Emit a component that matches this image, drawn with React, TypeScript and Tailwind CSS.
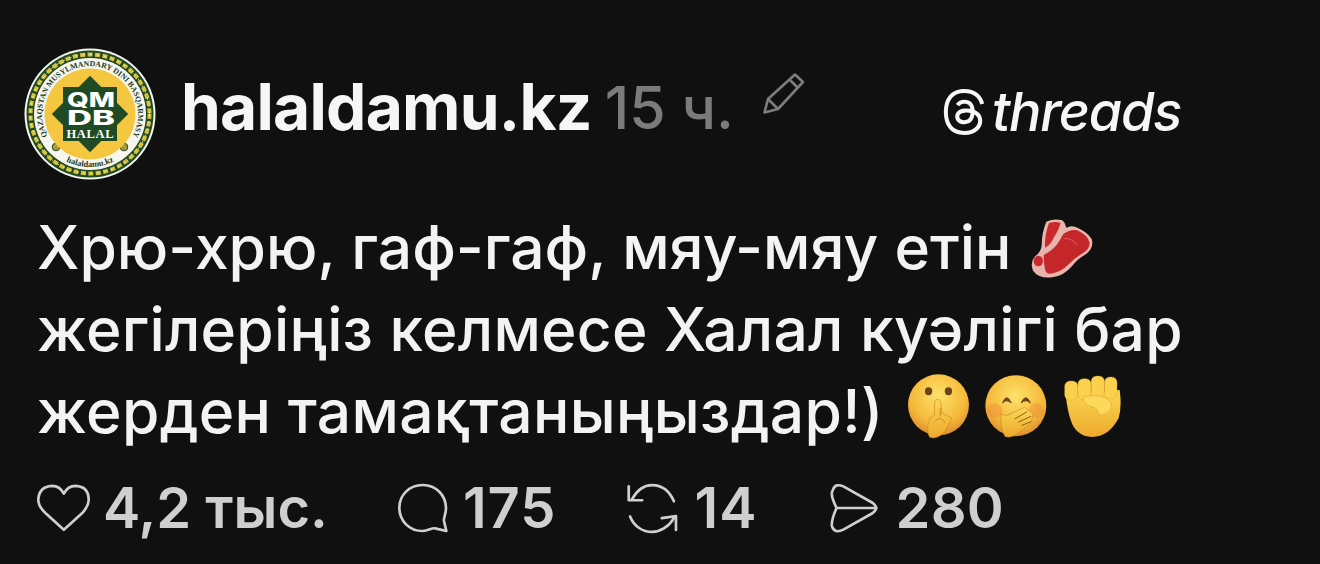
import { SiThreads } from "react-icons/si";

function Logo() {
  return (
    <svg width="132" height="132" viewBox="0 0 132 132" className="shrink-0">
      <defs>
        <path id="topArc" d="M 32 100 A 48 48 0 1 1 100 100" />
        <path id="bottomArc" d="M 28.5 103.5 A 53 53 0 0 0 103.5 103.5" />
      </defs>
      <circle cx="66" cy="66" r="65.5" fill="#f4f6ee" />
      <circle cx="66" cy="66" r="63.5" fill="#1f4a24" />
      <circle cx="66" cy="66" r="59.5" fill="none" stroke="#d8c23c" strokeWidth="4" strokeDasharray="5 2.5" />
      <circle cx="66" cy="66" r="59.5" fill="none" stroke="#f0e9b0" strokeWidth="1" strokeDasharray="2 5" />
      <circle cx="66" cy="66" r="56" fill="#f7f7f0" />
      <text fontFamily="Liberation Serif, serif" fontWeight="700" fontSize="7.8" fill="#1d3a20">
        <textPath href="#topArc" startOffset="50%" textAnchor="middle">QAZAQSTAN MUSYLMANDARY DINI BASQARMASY</textPath>
      </text>
      <text fontFamily="Liberation Serif, serif" fontWeight="700" fontSize="8.5" fill="#1d3a20">
        <textPath href="#bottomArc" startOffset="50%" textAnchor="middle">halaldamu.kz</textPath>
      </text>
      <circle cx="32" cy="99" r="3.8" fill="#a89b3c" stroke="#1f4a24" strokeWidth="1" />
      <circle cx="100" cy="99" r="3.8" fill="#a89b3c" stroke="#1f4a24" strokeWidth="1" />
      <circle cx="66" cy="66" r="45.5" fill="#f5c63f" />
      <rect x="39" y="39" width="54" height="54" fill="#1f4a24" />
      <rect x="39" y="39" width="54" height="54" fill="#1f4a24" transform="rotate(45 66 66)" />
      <g fontFamily="Inter, sans-serif" fontWeight="800" fill="#fff">
        <text x="43" y="59" fontSize="20.5" textLength="48" lengthAdjust="spacingAndGlyphs">QM</text>
        <text x="43" y="77" fontSize="20.5" textLength="48" lengthAdjust="spacingAndGlyphs">DB</text>
      </g>
      <text x="66" y="90" fontFamily="Liberation Serif, serif" fontWeight="700" fontSize="12.5" fill="#fff" textAnchor="middle" textLength="47">HALAL</text>
    </svg>
  );
}

function Meat() {
  return (
    <svg width="65" height="60" viewBox="60 0 195 180" className="shrink-0">
      <path d="M112 8 Q135 -2 160 4 Q170 12 172 26 Q185 18 200 24 Q235 38 248 60 Q256 85 232 105 Q205 120 190 140 Q165 170 130 175 Q90 180 72 155 Q62 130 78 112 Q95 100 98 80 Q98 40 112 8 Z" fill="#e8b4ac" />
      <path d="M120 12 Q140 6 155 12 Q150 30 135 55 Q125 78 108 86 Q106 50 120 12 Z" fill="#c9282c" />
      <path d="M163 45 Q185 30 205 34 Q238 50 242 72 Q242 90 222 102 Q195 118 180 135 Q155 160 125 164 Q110 165 108 150 Q104 130 104 108 Q130 95 145 75 Q155 60 163 45 Z" fill="#c4262a" />
      <path d="M165 58 Q190 58 205 78" fill="none" stroke="#e0605c" strokeWidth="3" />
      <ellipse cx="88" cy="126" rx="14" ry="16" fill="#c9282c" />
    </svg>
  );
}

function EmojiDefs() {
  return (
    <svg width="0" height="0" className="absolute">
      <defs>
        <radialGradient id="face" cx="50%" cy="35%" r="70%">
          <stop offset="0%" stopColor="#fde26a" />
          <stop offset="65%" stopColor="#f5b93a" />
          <stop offset="100%" stopColor="#d9822a" />
        </radialGradient>
        <linearGradient id="hand" x1="0" y1="0" x2="0" y2="1">
          <stop offset="0%" stopColor="#fbd755" />
          <stop offset="100%" stopColor="#eda92c" />
        </linearGradient>
      </defs>
    </svg>
  );
}

function Shush() {
  return (
    <svg width="63" height="67" viewBox="50 20 190 200" className="shrink-0">
      <circle cx="145" cy="115" r="92" fill="url(#face)" />
      <ellipse cx="115" cy="74" rx="11" ry="12" fill="#6b4419" />
      <ellipse cx="175" cy="74" rx="11" ry="12" fill="#6b4419" />
      <path d="M133 105 Q142 92 152 105 L155 140 L185 155 L165 195 Q140 222 118 212 Q105 190 120 155 L133 145 Z" fill="url(#hand)" stroke="#c98a24" strokeWidth="2" />
      <path d="M135 165 Q150 145 165 170 M150 125 L150 150" fill="none" stroke="#c98a24" strokeWidth="3" />
    </svg>
  );
}

function Cover() {
  return (
    <svg width="63" height="65" viewBox="285 25 190 195" className="shrink-0">
      <circle cx="378" cy="120" r="92" fill="url(#face)" />
      <circle cx="315" cy="135" r="22" fill="#ef8a3c" opacity=".45" />
      <circle cx="440" cy="135" r="22" fill="#ef8a3c" opacity=".45" />
      <path d="M338 112 Q350 80 364 112 Q350 98 338 112 Z" fill="#6b4419" stroke="#6b4419" strokeWidth="3" />
      <path d="M394 112 Q408 80 422 112 Q408 98 394 112 Z" fill="#6b4419" stroke="#6b4419" strokeWidth="3" />
      <path d="M333 145 L350 150 L405 125 L430 145 L425 170 L395 195 Q365 222 345 212 Q330 185 333 145 Z" fill="url(#hand)" stroke="#c98a24" strokeWidth="2" />
      <path d="M375 160 L412 138 M385 170 L424 152 M395 180 L424 168" stroke="#8a5a17" strokeWidth="3" fill="none" />
    </svg>
  );
}

function Fist() {
  return (
    <svg width="57" height="63" viewBox="525 25 172 190" className="shrink-0">
      <path d="M530 85 L693 70 Q700 120 690 155 Q660 212 610 212 Q560 210 545 160 Q535 130 530 85 Z" fill="url(#hand)" />
      <rect x="527" y="43" width="40" height="58" rx="16" fill="#fbd04c" stroke="#d99a2a" strokeWidth="1" />
      <rect x="567" y="36" width="40" height="64" rx="16" fill="#fbd04c" stroke="#d99a2a" strokeWidth="1" />
      <rect x="607" y="28" width="40" height="68" rx="16" fill="#fbd04c" stroke="#d99a2a" strokeWidth="1" />
      <rect x="647" y="31" width="38" height="66" rx="16" fill="#fbd04c" stroke="#d99a2a" strokeWidth="1" />
      <path d="M585 90 Q650 78 668 110 Q672 145 630 146 Q632 124 598 118 Q578 105 585 90 Z" fill="#fcd95a" stroke="#d99a2a" strokeWidth="1.5" />
    </svg>
  );
}

function Heart() {
  return (
    <svg width="53" height="48" viewBox="50 44 158 142" className="shrink-0" fill="none" stroke="#cfcfcf" strokeWidth="8" strokeLinejoin="round">
      <path d="M130 180 L75 130 Q52 108 54 88 Q57 51 95 49 Q118 49 130 72 Q142 49 165 49 Q203 51 204 88 Q205 108 185 130 Z" />
    </svg>
  );
}

function Bubble() {
  return (
    <svg width="50" height="50" viewBox="1134 36 150 150" className="shrink-0" fill="none" stroke="#cfcfcf" strokeWidth="8" strokeLinejoin="round" strokeLinecap="round">
      <path d="M1208 42 C1250 42 1278 75 1278 112 C1278 130 1270 140 1272 150 L1279 180 L1245 172 C1235 170 1225 180 1208 180 C1168 180 1138 150 1138 110 C1138 72 1168 42 1208 42 Z" />
    </svg>
  );
}

function Repost() {
  return (
    <svg width="54" height="54" viewBox="325 30 160 160" className="shrink-0" fill="none" stroke="#cfcfcf" strokeWidth="8" strokeLinejoin="round" strokeLinecap="round">
      <path d="M470 90 C455 55 430 42 405 42 C380 42 360 58 345 85" />
      <path d="M336 46 L336 87 L376 87" />
      <path d="M340 135 C352 165 378 181 405 181 C430 181 455 165 470 140" />
      <path d="M434 140 L476 134 L476 175" />
    </svg>
  );
}

function Send() {
  return (
    <svg width="50" height="52" viewBox="932 32 152 156" className="shrink-0" fill="none" stroke="#cfcfcf" strokeWidth="8" strokeLinejoin="round" strokeLinecap="round">
      <path d="M945 52 Q952 34 977 45 L1064 94 Q1086 110 1064 126 L977 175 Q948 190 941 165 Q938 148 955 110 Q938 76 941 62 Z" />
      <path d="M955 110 L1076 110" />
    </svg>
  );
}

function Pencil() {
  return (
    <svg width="46" height="46" viewBox="0 0 46 46" className="shrink-0" fill="none" stroke="#7d7d7d" strokeWidth="2.6" strokeLinejoin="round">
      <path d="M34 3.5 L42 11 L17 38 L3.5 41.5 L7 28 Z" />
      <path d="M29 9 L37 17 M7 28 L17 38" />
    </svg>
  );
}

function Stat({ icon, label, className }: { icon: React.ReactNode; label: string; className: string }) {
  return (
    <div className={`flex items-center ${className}`}>
      {icon}
      <span>{label}</span>
    </div>
  );
}

export default function App() {
  return (
    <div className="flex h-[564px] w-[1320px] flex-col overflow-hidden bg-[#101010] pt-12 text-white [font-family:Inter,'Noto_Sans',sans-serif]">
      <EmojiDefs />
      <div className="flex h-[132px] items-center pl-6">
        <Logo />
        <span className="mb-[14px] ml-[25px] text-[64px] leading-none font-bold tracking-[-0.75px] text-[#f6f6f6]">halaldamu.kz</span>
        <span className="mb-[14px] ml-[13px] text-[59px] leading-none font-medium text-[#7b7b7b]">15 ч.</span>
        <span className="mb-[40px] ml-[27px]">
          <Pencil />
        </span>
        <div className="mb-[5px] ml-[134px] flex items-center">
          <SiThreads size={46} className="text-[#f6f6f6]" />
          <span className="ml-[5px] text-[54px] leading-none font-medium tracking-[-1.3px] text-[#f6f6f6] italic">threads</span>
        </div>
      </div>

      <div className="mt-[26px] flex flex-col pl-[37px] text-[60.5px] leading-[82px] font-medium text-[#f3f3f3]">
        <div className="flex h-[82px] items-center">
          <span>Хрю-хрю, гаф-гаф, мяу-мяу етін</span>
          <span className="mt-1 ml-[18px]"><Meat /></span>
        </div>
        <div className="flex h-[82px] items-center tracking-[0.22px]">жегілеріңіз келмесе Халал куәлігі бар</div>
        <div className="flex h-[82px] items-center tracking-[0.3px]">
          <span>жерден тамақтаныңыздар!)</span>
          <span className="mb-[10px] ml-[23px] flex items-center">
            <Shush />
            <span className="ml-[15px]"><Cover /></span>
            <span className="ml-[16px]"><Fist /></span>
          </span>
        </div>
      </div>

      <div className="mt-[26px] flex h-[60px] items-center pl-[37px] text-[56px] leading-none font-semibold text-[#cfcfcf]">
        <Stat icon={<Heart />} label="4,2 тыс." className="gap-[13px]" />
        <Stat icon={<Bubble />} label="175" className="ml-[70px] gap-[15px] tracking-[1px]" />
        <Stat icon={<Repost />} label="14" className="ml-[68px] gap-[16px] tracking-[1px]" />
        <Stat icon={<Send />} label="280" className="ml-[72px] gap-[16px] tracking-[0.3px]" />
      </div>
    </div>
  );
}
